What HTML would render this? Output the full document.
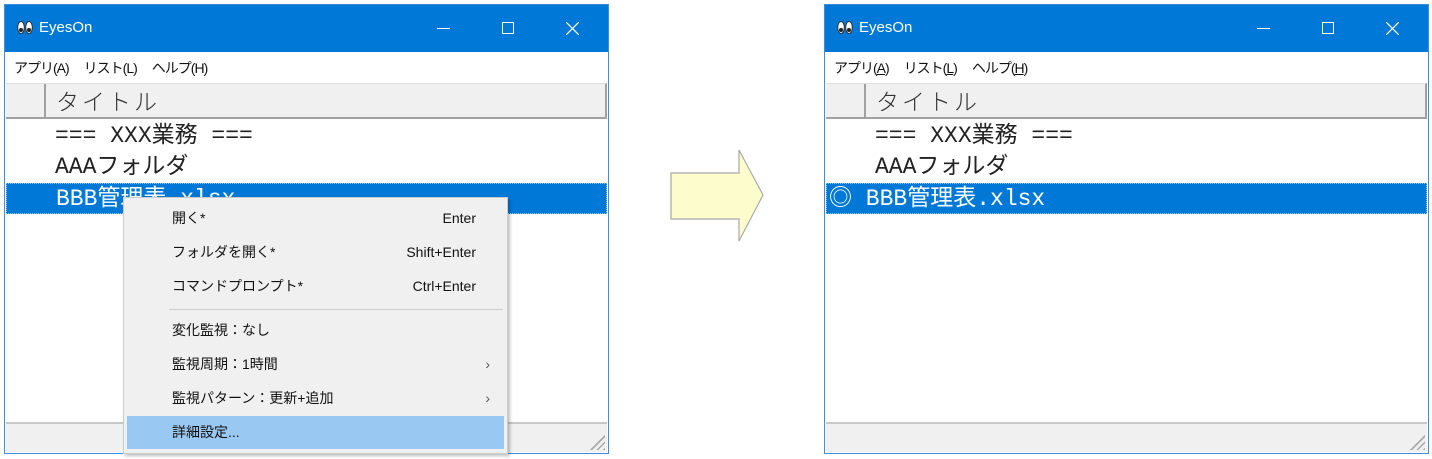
<!DOCTYPE html>
<html><head><meta charset="utf-8"><style>
*{margin:0;padding:0;box-sizing:border-box}
body{width:1432px;height:459px;background:#fff;position:relative;overflow:hidden;font-family:"Liberation Sans","Noto Sans CJK JP",sans-serif}
.win{position:absolute;top:4px;width:605px;height:450px;border:1px solid #3b8fdc;background:#fff}
.tb{position:absolute;left:0;top:0;right:0;height:47px;background:#0078d7;color:#fff}
.tb .t{position:absolute;left:34px;top:14px;font-size:15px}
.eyes{position:absolute;left:12px;top:16px;width:16px;height:13px}
.menu{position:absolute;left:0;right:0;top:47px;height:28px;font-size:14px;color:#111;padding:6px 0 0 9px;letter-spacing:-1px}
.menu span{margin-right:15px}
.hdr{position:absolute;left:1px;right:1px;top:78px;height:36px;background:#f0f0f0;border-top:1px solid #e0e0e0;border-bottom:2px solid #a0a0a0;border-right:2px solid #a0a0a0}
.hdr .s{position:absolute;left:38px;top:0;bottom:0;border-left:2px solid #a0a0a0}
.hdr .tx{position:absolute;left:50px;top:-1px;font-size:23px;color:#333;font-family:"Noto Sans CJK JP",sans-serif;letter-spacing:3px;font-weight:300}
.row{position:absolute;left:1px;right:1px;height:31px;font-family:"Liberation Mono","Noto Sans CJK JP",monospace;font-size:23px;color:#222;padding-left:49px;line-height:30px;white-space:nowrap;overflow:hidden}
.sel{background:#0078d7;color:#fff;border:1px dotted #9cc}
.sb{position:absolute;left:1px;right:1px;bottom:1px;height:30px;background:#f0f0f0;border-top:2px solid #c8c8c8}
.grip{position:absolute;right:2px;bottom:2px;width:16px;height:16px;background:repeating-linear-gradient(135deg,transparent 0 3px,#aaa 3px 4.5px);clip-path:polygon(100% 0,100% 100%,0 100%)}
.pop{position:absolute;left:123px;top:197px;width:385px;height:257px;background:#f0f0f0;border:1px solid #ccc;box-shadow:2px 2px 3px rgba(0,0,0,.25);font-size:14px;color:#111}
.it{position:absolute;left:3px;right:3px;height:33px;line-height:33px;padding-left:45px}
.it .k{position:absolute;right:28px;top:0}
.it .a{position:absolute;right:14px;top:0;color:#555}
.hl{background:#99c9f3}
</style></head><body>

<div class="win" style="left:4px">
 <div class="tb">
  <svg class="eyes" viewBox="0 0 16 13"><ellipse cx="4" cy="6.5" rx="3.3" ry="6" fill="#fff" stroke="#333"/><ellipse cx="12" cy="6.5" rx="3.3" ry="6" fill="#fff" stroke="#333"/><circle cx="4" cy="9" r="2" fill="#222"/><circle cx="12" cy="9" r="2" fill="#222"/></svg>
  <div class="t">EyesOn</div>
  <div style="position:absolute;left:432px;top:23px;width:13px;height:1px;background:#fff"></div>
  <div style="position:absolute;left:497px;top:17px;width:12px;height:12px;border:1px solid #fff"></div>
  <svg style="position:absolute;left:561px;top:17px" width="13" height="13"><path d="M0 0L13 13M13 0L0 13" stroke="#fff" stroke-width="1.3"/></svg>
 </div>
 <div class="menu"><span>アプリ(A)</span><span>リスト(L)</span><span>ヘルプ(H)</span></div>
 <div class="hdr"><div class="s"></div><div class="tx">タイトル</div></div>
 <div class="row" style="top:116px">=== XXX業務 ===</div>
 <div class="row" style="top:147px">AAAフォルダ</div>
 <div class="row sel" style="top:178px">BBB管理表.xlsx</div>
 <div class="sb"><div class="grip"></div></div>
</div>

<div class="pop">
 <div class="it" style="top:4px">開く*<span class="k">Enter</span></div>
 <div class="it" style="top:38px">フォルダを開く*<span class="k">Shift+Enter</span></div>
 <div class="it" style="top:72px">コマンドプロンプト*<span class="k">Ctrl+Enter</span></div>
 <div style="position:absolute;left:45px;right:4px;top:111px;height:1px;background:#ccc"></div>
 <div class="it" style="top:116px">変化監視：なし</div>
 <div class="it" style="top:150px">監視周期：1時間<span class="a">›</span></div>
 <div class="it" style="top:184px">監視パターン：更新+追加<span class="a">›</span></div>
 <div class="it hl" style="top:218px">詳細設定...</div>
</div>

<svg style="position:absolute;left:668px;top:148px" width="98" height="96"><path d="M3 25H71V2L95 47L71 93V71H3Z" fill="#fdfccc" stroke="#a8a8a8" stroke-width="1.2"/></svg>

<div class="win" style="left:824px">
 <div class="tb">
  <svg class="eyes" viewBox="0 0 16 13"><ellipse cx="4" cy="6.5" rx="3.3" ry="6" fill="#fff" stroke="#333"/><ellipse cx="12" cy="6.5" rx="3.3" ry="6" fill="#fff" stroke="#333"/><circle cx="4" cy="9" r="2" fill="#222"/><circle cx="12" cy="9" r="2" fill="#222"/></svg>
  <div class="t">EyesOn</div>
  <div style="position:absolute;left:432px;top:23px;width:13px;height:1px;background:#fff"></div>
  <div style="position:absolute;left:497px;top:17px;width:12px;height:12px;border:1px solid #fff"></div>
  <svg style="position:absolute;left:561px;top:17px" width="13" height="13"><path d="M0 0L13 13M13 0L0 13" stroke="#fff" stroke-width="1.3"/></svg>
 </div>
 <div class="menu"><span>アプリ(<u>A</u>)</span><span>リスト(<u>L</u>)</span><span>ヘルプ(<u>H</u>)</span></div>
 <div class="hdr"><div class="s"></div><div class="tx">タイトル</div></div>
 <div class="row" style="top:116px">=== XXX業務 ===</div>
 <div class="row" style="top:147px">AAAフォルダ</div>
 <div class="row sel" style="top:178px;padding-left:2px">◎ BBB管理表.xlsx</div>
 <div class="sb"><div class="grip"></div></div>
</div>
</body></html>
